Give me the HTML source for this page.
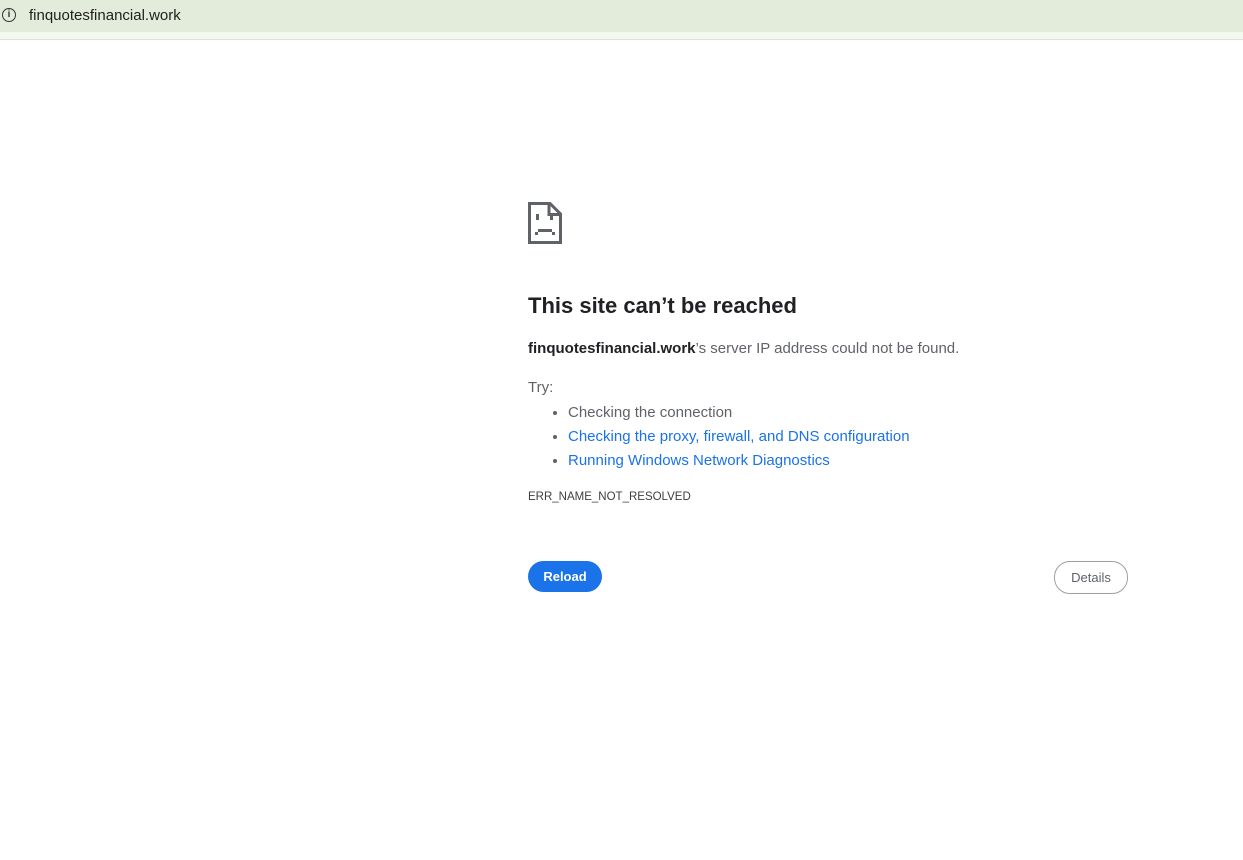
<!DOCTYPE html>
<html><head><meta charset="utf-8"><style>
body{margin:0;width:1243px;height:860px;background:#fff;font-family:"Liberation Sans",sans-serif;position:relative;overflow:hidden}
.bar{position:absolute;left:0;top:0;width:1243px;height:32px;background:#e3ecda}
.strip{position:absolute;left:0;top:32px;width:1243px;height:7px;background:#f3f7ef;border-bottom:1px solid #dde3d8}
.url{position:absolute;left:29px;top:7px;font-size:15px;color:#1f1f1f}
.info{position:absolute;left:2px;top:8px;width:12px;height:12px;border:1.5px solid #333;border-radius:50%;font-size:10px;font-weight:bold;text-align:center;line-height:12px;color:#333}
.t{position:absolute;left:528px;color:#5f6368;font-size:15px}
h1{position:absolute;left:528px;top:293px;margin:0;font-size:22px;font-weight:bold;color:#202124}
ul{position:absolute;left:528px;top:401px;margin:0;padding-left:40px;font-size:15px;line-height:24px;color:#5f6368}
a{color:#1a73e8;text-decoration:none}
.btn{position:absolute;border-radius:16px;font-size:13px;text-align:center;box-sizing:border-box}
</style></head><body>
<div class="bar"></div><div class="strip"></div>
<div class="info">i</div>
<div class="url">finquotesfinancial.work</div>
<svg style="position:absolute;left:528px;top:202px" width="34" height="42" viewBox="0 0 34 42">
<path d="M1.5 1.5H22L32.5 12V40.5H1.5Z" fill="none" stroke="#5f6368" stroke-width="3"/>
<path d="M21 1.5V12.5H32.5" fill="none" stroke="#5f6368" stroke-width="3"/>
<rect x="8" y="12" width="3" height="6" fill="#5f6368"/>
<rect x="22" y="14" width="3" height="4" fill="#5f6368"/>
<rect x="10" y="27" width="14" height="3" fill="#5f6368"/>
<rect x="7" y="30" width="3" height="3" fill="#5f6368"/>
<rect x="24" y="30" width="3" height="3" fill="#5f6368"/>
</svg>
<h1>This site can’t be reached</h1>
<div class="t" style="top:340px"><b style="color:#202124">finquotesfinancial.work</b>’s server IP address could not be found.</div>
<div class="t" style="top:379px">Try:</div>
<ul><li>Checking the connection</li><li><a>Checking the proxy, firewall, and DNS configuration</a></li><li><a>Running Windows Network Diagnostics</a></li></ul>
<div class="t" style="top:491px;font-size:11.5px;color:#3c4043">ERR_NAME_NOT_RESOLVED</div>
<div class="btn" style="left:528px;top:561px;width:74px;height:31px;background:#1a73e8;color:#fff;line-height:31px;font-weight:bold">Reload</div>
<div class="btn" style="left:1054px;top:561px;width:74px;height:33px;border:1px solid #9aa0a6;color:#5f6368;line-height:31px">Details</div>
</body></html>
